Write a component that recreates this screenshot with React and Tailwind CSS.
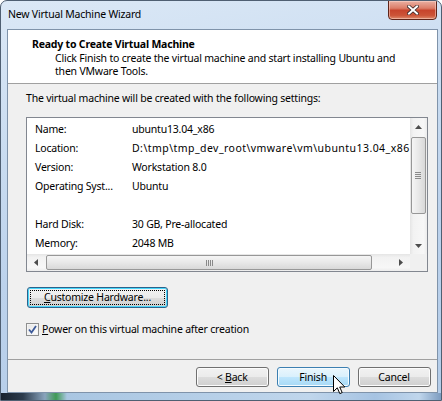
import React from "react";

const rows = [
  ["Name:", "ubuntu13.04_x86"],
  ["Location:", "D:\\tmp\\tmp_dev_root\\vmware\\vm\\ubuntu13.04_x86"],
  ["Version:", "Workstation 8.0"],
  ["Operating Syst...", "Ubuntu"],
  ["", ""],
  ["Hard Disk:", "30 GB, Pre-allocated"],
  ["Memory:", "2048 MB"],
];

const btnNormal =
  "border border-[#707070] rounded-[3px] bg-[linear-gradient(to_bottom,#f2f2f2_0%,#ebebeb_50%,#dddddd_50%,#cfcfcf_100%)] shadow-[inset_0_0_0_1px_#fcfcfc]";
const btnHover =
  "border border-[#3c7fb1] rounded-[3px] bg-[linear-gradient(to_bottom,#eaf6fd_0%,#d9f0fc_50%,#bee6fd_50%,#a7d9f5_100%)] shadow-[inset_0_0_0_1px_#f4fbff]";

function Arrow({ dir }) {
  const pts = {
    up: "0,4 3.5,0 7,4",
    down: "0,0 3.5,4 7,0",
    left: "4,0 0,3.5 4,7",
    right: "0,0 4,3.5 0,7",
  }[dir];
  const vertical = dir === "up" || dir === "down";
  return (
    <svg width={vertical ? 7 : 4} height={vertical ? 4 : 7} viewBox={vertical ? "0 0 7 4" : "0 0 4 7"}>
      <polygon points={pts} fill="#4d4d4d" />
    </svg>
  );
}

function Checkmark() {
  return (
    <svg width="9" height="9" viewBox="0 0 9 9">
      <path d="M1 4.5 L3.5 7.5 L8 1" fill="none" stroke="#3d5a99" strokeWidth="1.8" />
    </svg>
  );
}

function Cursor() {
  return (
    <svg width="13" height="20" viewBox="0 0 13 20" className="absolute left-[332px] top-[374px]">
      <path
        d="M0.5 0.5 L0.5 16.5 L4.3 12.8 L6.8 18.6 L9.2 17.6 L6.7 12 L11.8 12 Z"
        fill="#ffffff"
        stroke="#000000"
        strokeWidth="1"
      />
    </svg>
  );
}

export default function App() {
  return (
    <div className="relative w-[442px] h-[401px] overflow-hidden flex flex-col rounded-t-[7px] border border-[#4f5f72] bg-[linear-gradient(170deg,#dbe8f6_0%,#c8dbf0_35%,#bcd2ec_60%,#b4cce8_100%)] font-['Noto_Sans',sans-serif] text-[10.5px] tracking-[-0.2px] text-black">
      {/* title bar */}
      <div className="h-[28px] flex justify-between items-start shrink-0">
        <div className="pl-[7px] mt-[6px] leading-[15px]">New Virtual Machine Wizard</div>
        <div className="w-[49px] h-[20px] -mt-[1px] mr-[4px] rounded-b-[4px] border border-[#5e2419] bg-[linear-gradient(to_bottom,#eab0a2_0%,#dc7d68_40%,#c7442c_52%,#cc5438_80%,#dd8a6c_100%)] shadow-[inset_0_0_0_1px_rgba(255,220,210,0.5)] flex items-center justify-center">
          <svg width="12" height="10" viewBox="0 0 12 10">
            <path d="M2 1.5 L10 8.5 M10 1.5 L2 8.5" stroke="#3b2a2a" strokeWidth="3.6" strokeLinecap="square" />
            <path d="M2 1.5 L10 8.5 M10 1.5 L2 8.5" stroke="#ffffff" strokeWidth="2" strokeLinecap="square" />
          </svg>
        </div>
      </div>

      {/* client */}
      <div className="flex-1 pl-[6px] pr-[7px] flex">
        <div className="flex-1 border border-[#7f93aa] flex flex-col">
          {/* header */}
          <div className="h-[54px] bg-white border-b border-[#a0a0a0] pt-[7px] shrink-0">
            <div className="pl-[24px] font-bold leading-[15px]">Ready to Create Virtual Machine</div>
            <div className="pl-[47px] pr-[20px] leading-[13px]">
              Click Finish to create the virtual machine and start installing Ubuntu and
              <br />
              then VMware Tools.
            </div>
          </div>

          {/* body */}
          <div className="h-[276px] bg-[#f0f0f0] border-b border-[#a0a0a0] pt-[7px] pl-[18px] pr-[9px] shrink-0">
            <div className="leading-[15px]">The virtual machine will be created with the following settings:</div>

            <div className="mt-[11px] h-[155px] border border-[#828790] bg-white flex flex-col">
              <div className="flex-1 flex min-h-0">
                <div className="flex-1 pt-[2px] overflow-hidden">
                  {rows.map(([k, v], i) => (
                    <div key={i} className="h-[19px] flex items-center whitespace-nowrap">
                      <div className="pl-[8px] w-[105px] shrink-0">{k}</div>
                      <div className={i === 1 ? "tracking-[0.45px]" : ""}>{v}</div>
                    </div>
                  ))}
                </div>
                {/* vertical scrollbar */}
                <div className="w-[17px] bg-[linear-gradient(to_right,#e5e5e5,#f2f2f2_20%,#f7f7f7_80%,#ececec)] flex flex-col">
                  <div className="h-[17px] flex items-center justify-center">
                    <Arrow dir="up" />
                  </div>
                  <div className="mt-[2px] h-[77px] mx-[1px] rounded-[2px] border border-[#979797] bg-[linear-gradient(to_right,#f5f5f5,#e8e8e8_50%,#d8d8d8)] flex flex-col items-center justify-center gap-[1px]">
                    <div className="w-[6px] h-[1px] bg-[#8a8a8a]" />
                    <div className="w-[6px] h-[1px] bg-[#8a8a8a]" />
                    <div className="w-[6px] h-[1px] bg-[#8a8a8a]" />
                    <div className="w-[6px] h-[1px] bg-[#8a8a8a]" />
                  </div>
                  <div className="flex-1" />
                  <div className="h-[17px] flex items-center justify-center">
                    <Arrow dir="down" />
                  </div>
                </div>
              </div>
              {/* horizontal scrollbar */}
              <div className="h-[17px] flex shrink-0">
                <div className="flex-1 flex bg-[linear-gradient(to_bottom,#e5e5e5,#f2f2f2_20%,#f7f7f7_80%,#ececec)]">
                  <div className="w-[17px] flex items-center justify-center">
                    <Arrow dir="left" />
                  </div>
                  <div className="ml-[2px] w-[326px] my-[1px] rounded-[2px] border border-[#979797] bg-[linear-gradient(to_bottom,#f5f5f5,#e8e8e8_50%,#d8d8d8)] flex items-center justify-center gap-[1px]">
                    <div className="w-[1px] h-[6px] bg-[#8a8a8a]" />
                    <div className="w-[1px] h-[6px] bg-[#8a8a8a]" />
                    <div className="w-[1px] h-[6px] bg-[#8a8a8a]" />
                    <div className="w-[1px] h-[6px] bg-[#8a8a8a]" />
                  </div>
                  <div className="flex-1" />
                  <div className="w-[17px] flex items-center justify-center">
                    <Arrow dir="right" />
                  </div>
                </div>
                <div className="w-[17px] bg-[#f0f0f0]" />
              </div>
            </div>

            <div className="mt-[15px] ml-[1px] w-[141px] h-[21px] border border-[#2c628b] rounded-[3px] bg-[linear-gradient(to_bottom,#f2f2f2_0%,#ebebeb_50%,#dddddd_50%,#cfcfcf_100%)] shadow-[inset_0_0_0_1px_#48d7fb] outline outline-1 outline-dotted outline-black outline-offset-[-4px] flex items-center justify-center leading-[15px]">
              <span>
                <span className="underline">C</span>ustomize Hardware...
              </span>
            </div>

            <div className="mt-[14px] flex items-center gap-[3px]">
              <div className="w-[13px] h-[13px] border border-[#8e8f8f] bg-[linear-gradient(135deg,#e4e4e4,#ffffff)] flex items-center justify-center shadow-[inset_0_0_0_1px_#f4f4f4]">
                <Checkmark />
              </div>
              <div className="leading-[15px]">
                <span className="underline">P</span>ower on this virtual machine after creation
              </div>
            </div>
          </div>

          {/* footer */}
          <div className="flex-1 bg-[#f0f0f0] flex justify-end items-start pt-[7px] pr-[6px] gap-[8px]">
            <div className={`w-[73px] h-[20px] ${btnNormal} flex items-center justify-center leading-[15px]`}>
              <span>
                &lt; <span className="underline">B</span>ack
              </span>
            </div>
            <div className={`w-[73px] h-[20px] ${btnHover} flex items-center justify-center leading-[15px]`}>
              Finish
            </div>
            <div className={`w-[73px] h-[20px] ${btnNormal} flex items-center justify-center leading-[15px]`}>
              Cancel
            </div>
          </div>
        </div>
      </div>

      {/* bottom edge of frame */}
      <div className="h-[7px] shrink-0 bg-[linear-gradient(to_right,#17212d_0%,#2c3b4c_5%,#8aa4bd_10%,#3f9a55_12.5%,#a9c6e2_15%,#c0d6ec_70%,#a6c3e2_85%,#c0d6ec_95%,#7d9cc0_100%)]" />

      <Cursor />
    </div>
  );
}
